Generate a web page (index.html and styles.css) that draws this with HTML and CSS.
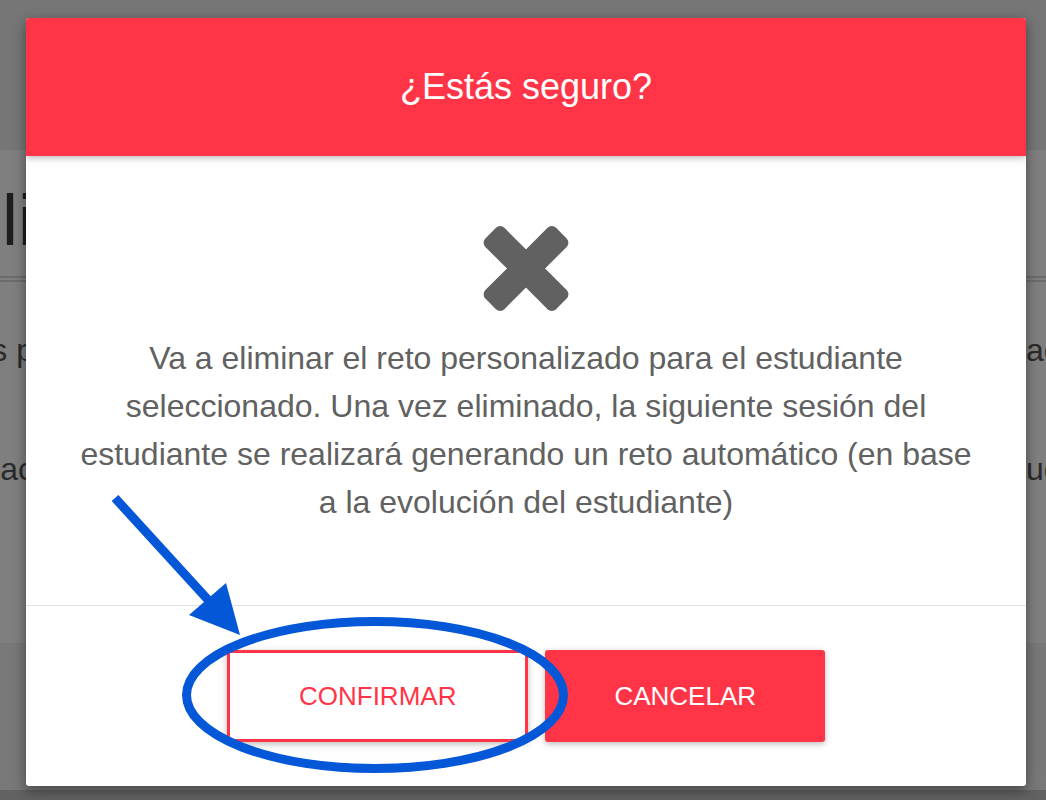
FILE: index.html
```html
<!DOCTYPE html>
<html lang="es">
<head>
  <meta charset="UTF-8">
  <title>Eliminar reto</title>
  <meta name="viewport" content="width=device-width, initial-scale=1">
  <link rel="stylesheet" href="styles.css">
</head>
<body>
  <!-- Page behind the modal (already dimmed by the backdrop) -->
  <div class="page">
    <div class="page-top"></div>
    <div class="page-content">
      <h2 class="page-title">li</h2>
      <div class="page-rule"></div>
      <div class="page-row">
        <span class="cell-left">s p</span>
        <span class="cell-right">ac</span>
      </div>
      <div class="page-row">
        <span class="cell-left">ac</span>
        <span class="cell-right">ue</span>
      </div>
    </div>
    <div class="page-footer"></div>
    <div class="page-bottom"></div>
  </div>

  <div class="modal">
    <div class="modal-header">
      <p class="modal-title">¿Estás seguro?</p>
    </div>
    <div class="modal-body">
      <svg class="icon-times" width="90" height="87" viewBox="0 0 90 87">
        <rect x="-5" y="30" width="100" height="27" rx="6" fill="#616161" transform="rotate(45 45 43.5)"/>
        <rect x="-5" y="30" width="100" height="27" rx="6" fill="#616161" transform="rotate(-45 45 43.5)"/>
      </svg>
      <p class="modal-text">Va a eliminar el reto personalizado para el estudiante seleccionado. Una vez eliminado, la siguiente sesión del estudiante se realizará generando un reto automático (en base a la evolución del estudiante)</p>
    </div>
    <div class="modal-footer">
      <button class="btn btn-outline">Confirmar</button>
      <button class="btn btn-danger">Cancelar</button>
    </div>
  </div>

  <!-- Hand-drawn annotation on top of the screenshot -->
  <svg class="annotation" width="1046" height="800" viewBox="0 0 1046 800">
    <line x1="115" y1="498" x2="210" y2="602" stroke="#0457d6" stroke-width="9"/>
    <polygon points="240,635 189,615 226,583" fill="#0457d6"/>
    <ellipse cx="375" cy="695" rx="188.5" ry="73.5" fill="none" stroke="#0457d6" stroke-width="9"/>
  </svg>
</body>
</html>
```

FILE: styles.css
```css
body {
  margin: 0;
  font-family: 'Liberation Sans', Arial, sans-serif;
  background: #777;
  overflow: hidden;
}
/* dimmed page */
.page {
  height: 800px;
  display: flex;
  flex-direction: column;
}
.page-top {
  height: 150px;
  background: #767676;
}
.page-content {
  height: 493px;
  background: #7f7f7f;
  padding-top: 30px;
  box-sizing: border-box;
}
.page-title {
  margin: 0;
  padding-left: 2px;
  font-size: 72px;
  font-weight: normal;
  line-height: 80px;
  color: #1e1e1e;
}
.page-rule {
  margin-top: 16px;
  height: 2px;
  border-bottom: 2px solid #6c6c6c;
  border-top: 2px solid #6c6c6c;
}
.page-row {
  display: flex;
  justify-content: space-between;
  font-size: 32px;
  color: #2a2a2a;
  margin-top: 50px;
}
.page-row + .page-row {
  margin-top: 82px;
}
.cell-left {
  width: 34px;
  display: flex;
  justify-content: flex-end;
  white-space: nowrap;
  overflow: hidden;
}
.cell-right {
  width: 20px;
  white-space: nowrap;
  overflow: hidden;
}
.page-footer {
  flex: 1;
  background: #787878;
}
.page-bottom {
  height: 10px;
  background: #626262;
}

/* modal */
.modal {
  position: absolute;
  top: 18px;
  left: 26px;
  width: 1000px;
  background: #fff;
  border-radius: 3px;
  overflow: hidden;
  box-shadow: 0 5px 11px 0 rgba(0,0,0,.25), 0 4px 15px 0 rgba(0,0,0,.2);
}
.modal-header {
  height: 138px;
  background: #ff3547;
  display: flex;
  align-items: center;
  justify-content: center;
  position: relative;
  z-index: 1;
  box-shadow: 0 2px 5px 0 rgba(0,0,0,.16), 0 2px 10px 0 rgba(0,0,0,.12);
}
.modal-title {
  margin: 0;
  color: #fff;
  font-size: 36px;
  line-height: 1;
}
.modal-body {
  padding: 69px 45px 79px;
  text-align: center;
}
.icon-times {
  display: block;
  margin: 0 auto 22px;
}
.modal-text {
  margin: 0;
  font-size: 32px;
  line-height: 48px;
  color: #616161;
}
.modal-footer {
  border-top: 1px solid #dfe2e6;
  padding: 44px 0;
  display: flex;
  justify-content: center;
  align-items: center;
  gap: 17px;
}
.btn {
  height: 92px;
  padding: 0 69px;
  font-family: 'Liberation Sans', Arial, sans-serif;
  font-size: 26px;
  text-transform: uppercase;
  border-radius: 3px;
  cursor: pointer;
  box-shadow: 0 2px 5px 0 rgba(0,0,0,.16), 0 2px 10px 0 rgba(0,0,0,.12);
}
.btn-outline {
  background: #fff;
  color: #ff3547;
  border: 3px solid #ff3547;
  border-radius: 0;
}
.btn-danger {
  background: #ff3547;
  color: #fff;
  border: none;
}
.annotation {
  position: absolute;
  top: 0;
  left: 0;
  pointer-events: none;
}
```
